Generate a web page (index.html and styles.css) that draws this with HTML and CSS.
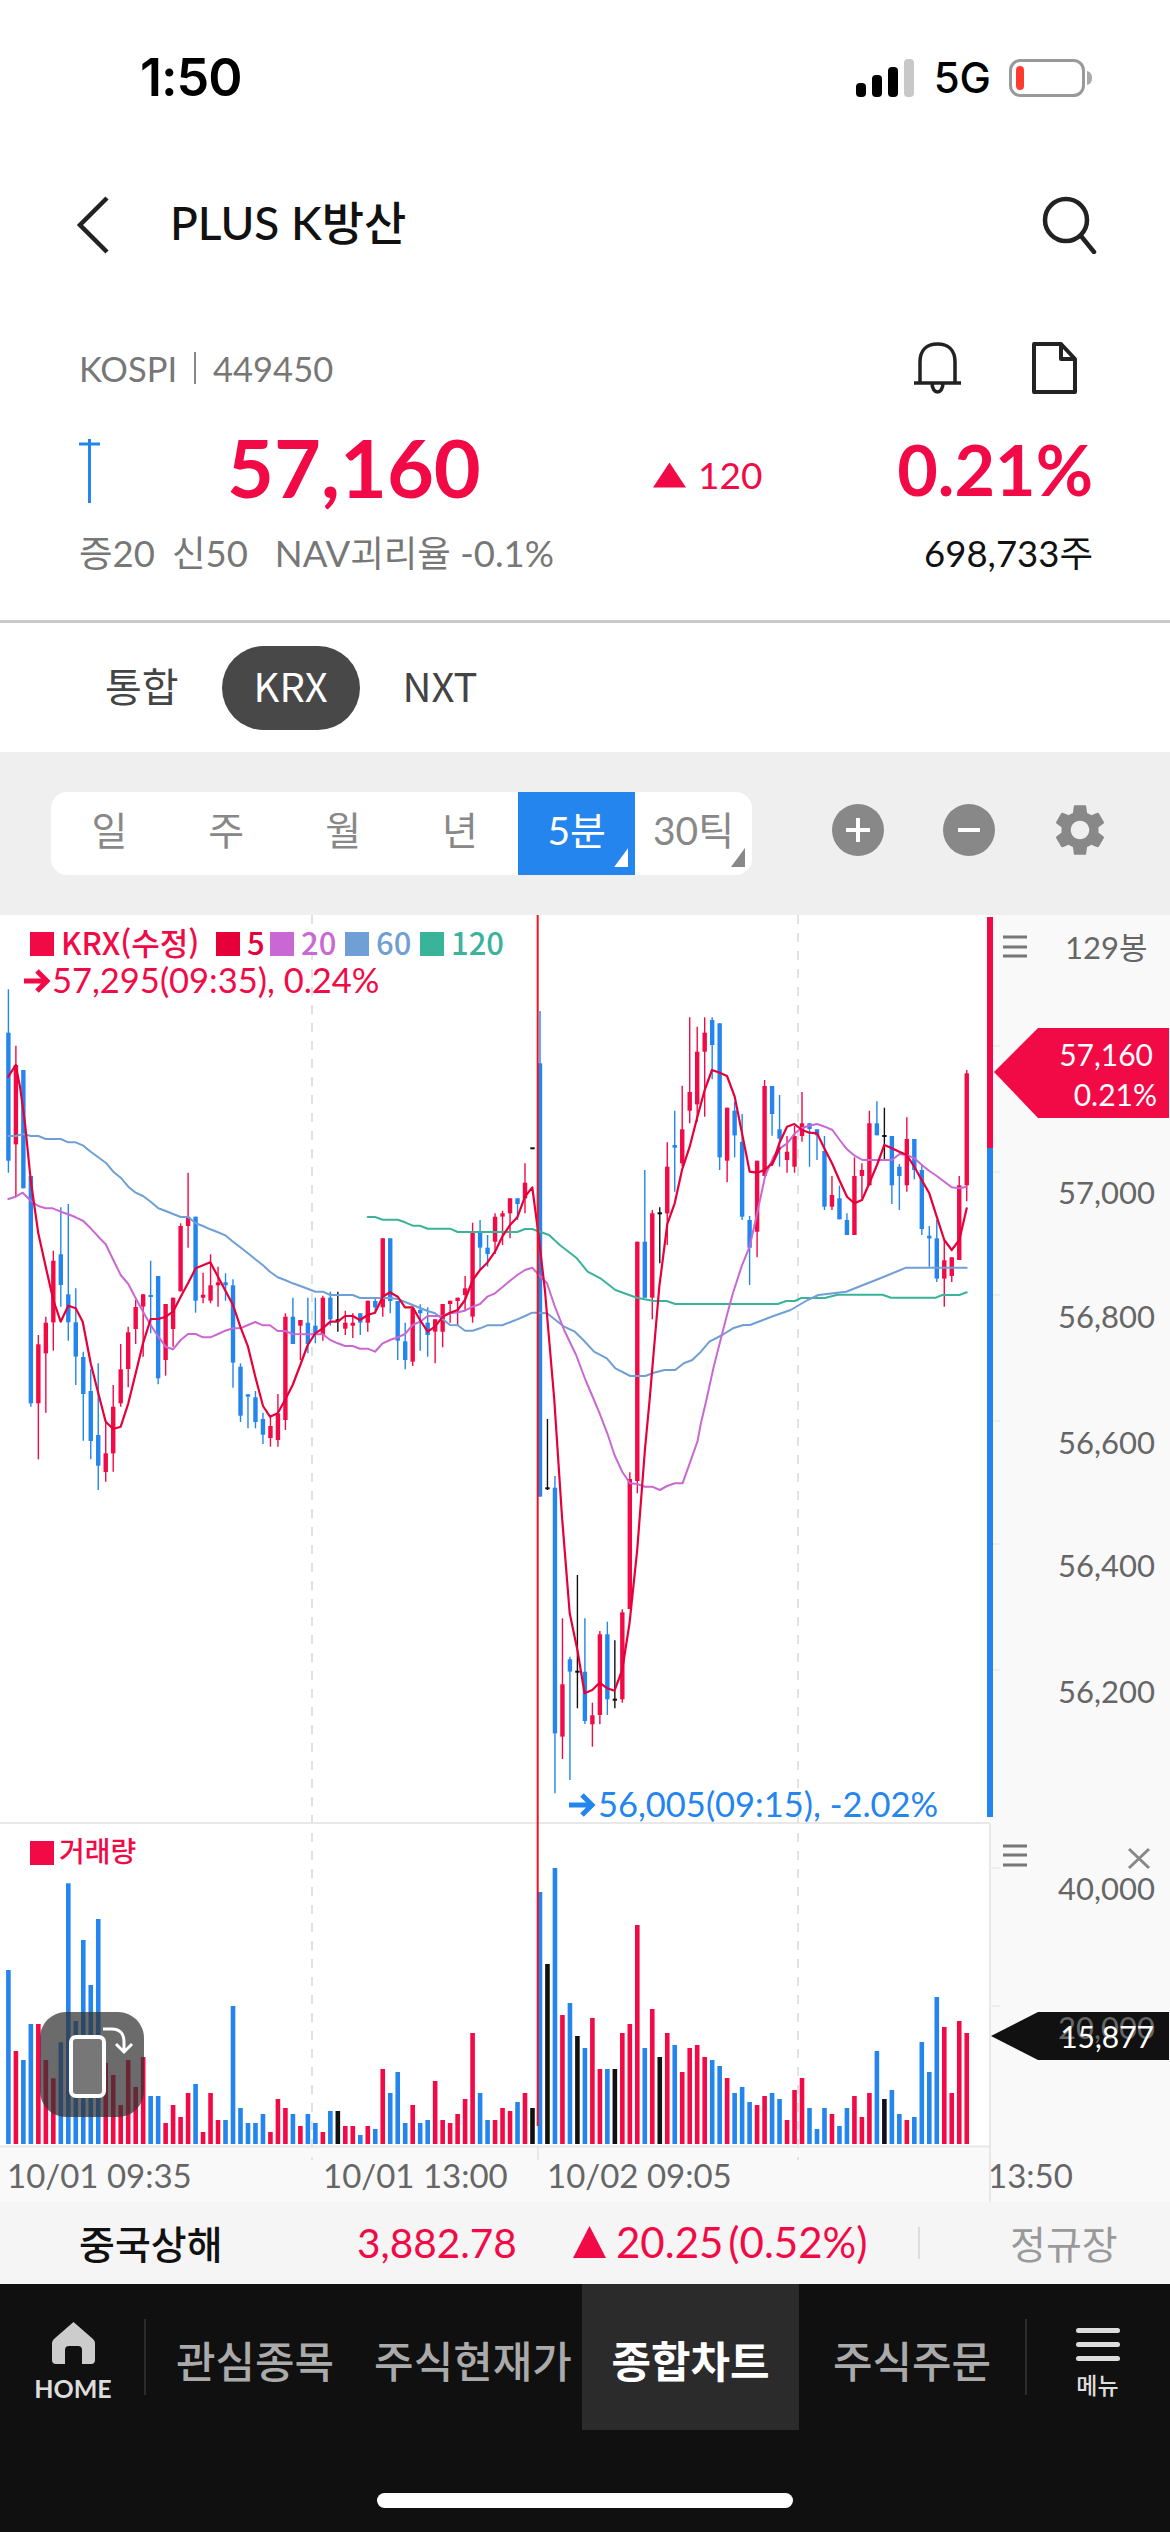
FILE: index.html
```html
<!DOCTYPE html>
<html lang="ko">
<head>
<meta charset="utf-8">
<title>PLUS K방산</title>
<link rel="stylesheet" href="styles.css">
</head>
<body>
<div class="phone">
  <div class="status">
    <span class="clock">1:50</span>
    <div class="status-right">
      <svg class="signal" viewBox="0 0 58 38"><rect class="sig-on" x="0" y="24" width="10" height="14" rx="4"/><rect class="sig-on" x="16" y="16" width="10" height="22" rx="4"/><rect class="sig-on" x="32" y="8" width="10" height="30" rx="4"/><rect class="sig-off" x="48" y="0" width="10" height="38" rx="4"/></svg>
      <span class="net">5G</span>
      <svg class="battery" viewBox="0 0 84 38"><rect class="bat-shell" x="1.5" y="1.5" width="73" height="35" rx="10"/><rect class="bat-level" x="7" y="7" width="8" height="24" rx="4"/><path class="bat-nub" d="M78 12 C82 13 83 16 83 19 C83 22 82 25 78 26 Z"/></svg>
    </div>
  </div>

  <div class="header">
    <svg class="back" viewBox="0 0 34 60"><path d="M31 3 L4 30 L31 57"/></svg>
    <h1 class="title">PLUS K방산</h1>
    <svg class="search" viewBox="0 0 56 58"><circle cx="25" cy="24" r="21"/><path d="M40 40 L53 56"/></svg>
  </div>

  <section class="quote">
    <div class="quote-meta">
      <span class="code">KOSPI<i class="code-sep"></i>449450</span>
      <div class="quote-actions">
        <svg class="bell" viewBox="0 0 49 53"><path d="M7 41 V20 C7 8 14 2 24.5 2 C35 2 42 8 42 20 V41 M1 41 H48 M19 41 C19 53 30 53 30 41"/></svg>
        <svg class="doc" viewBox="0 0 45 52"><path d="M2 2 H29 L43 17 V50 H2 Z M29 2 V17 H43"/></svg>
      </div>
    </div>
    <div class="quote-main">
      <svg class="mini" viewBox="0 0 21 64"><path d="M0 5 H21 M10.5 0 V64"/></svg>
      <span class="price">57,160</span>
      <span class="change"><i class="tri"></i>120</span>
      <span class="pct">0.21%</span>
    </div>
    <div class="quote-sub">
      <span class="sub-left"><span>증20</span><span>신50</span><span class="nav-rate">NAV괴리율 -0.1%</span></span>
      <span class="sub-right">698,733주</span>
    </div>
  </section>

  <nav class="tabs">
    <span class="tab">통합</span>
    <span class="tab tab-on">KRX</span>
    <span class="tab">NXT</span>
  </nav>

  <div class="toolbar">
    <div class="seg">
      <span class="seg-item">일</span>
      <span class="seg-item">주</span>
      <span class="seg-item">월</span>
      <span class="seg-item">년</span>
      <span class="seg-item seg-on corner">5분</span>
      <span class="seg-item corner">30틱</span>
    </div>
    <svg class="tool" viewBox="0 0 52 52"><circle class="tool-fill" cx="26" cy="26" r="26"/><path class="tool-mark" d="M26 14 V38 M14 26 H38"/></svg>
    <svg class="tool" viewBox="0 0 52 52"><circle class="tool-fill" cx="26" cy="26" r="26"/><path class="tool-mark" d="M15 26 H37"/></svg>
    <svg class="tool" viewBox="2.4 1.9 19.2 20.2"><path class="tool-fill" d="M19.14 12.94c.04-.3.06-.61.06-.94 0-.32-.02-.64-.07-.94l2.03-1.58c.18-.14.23-.41.12-.61l-1.92-3.32c-.12-.22-.37-.29-.59-.22l-2.39.96c-.5-.38-1.03-.7-1.62-.94l-.36-2.54c-.04-.24-.24-.41-.48-.41h-3.84c-.24 0-.43.17-.47.41l-.36 2.54c-.59.24-1.13.57-1.62.94l-2.39-.96c-.22-.08-.47 0-.59.22L2.74 8.87c-.12.21-.08.47.12.61l2.03 1.58c-.05.3-.09.63-.09.94s.02.64.07.94l-2.03 1.58c-.18.14-.23.41-.12.61l1.92 3.32c.12.22.37.29.59.22l2.39-.96c.5.38 1.03.7 1.62.94l.36 2.54c.05.24.24.41.48.41h3.84c.24 0 .44-.17.47-.41l.36-2.54c.59-.24 1.13-.56 1.62-.94l2.39.96c.22.08.47 0 .59-.22l1.92-3.32c.12-.22.07-.47-.12-.61l-2.01-1.58zM12 15.6c-1.98 0-3.6-1.62-3.6-3.6s1.62-3.6 3.6-3.6 3.6 1.62 3.6 3.6-1.62 3.6-3.6 3.6z"/></svg>
  </div>

  <svg class="chart" id="chart" viewBox="0 915 1170 1287" xmlns="http://www.w3.org/2000/svg">
    <rect class="plot" x="0" y="915" width="990" height="1232"/>
    <rect class="axis-bg" x="990" y="915" width="180" height="1287"/>
    <rect class="axis-bg" x="0" y="2147" width="1170" height="55"/>
    <path class="grid-dash" d="M312 915 V2160 M798 915 V2160"/>
    <path class="grid-solid" d="M0 1823 H990 M0 2146.5 H990 M990 1823 V2202 M538 2146 V2160"/>
    <path class="tick" d="M990 1046 H1000 M990 1172 H1000 M990 1295 H1000 M990 1421 H1000 M990 1544 H1000 M990 1670 H1000 M990 1868 H1000 M990 2006 H1000"/>

    <g id="volume"></g>
    <g id="candles"></g>
    <g id="lines"></g>

    <rect class="up-bar" x="987" y="917" width="6" height="231"/>
    <rect class="dn-bar" x="987" y="1148" width="6" height="669"/>
    <path class="cross" d="M537.7 915 V2126"/>

    <rect class="sq-main" x="30" y="932" width="24" height="24"/>
    <text class="leg leg-red" x="61" y="955">KRX(수정)</text>
    <rect class="sq-5" x="216" y="932" width="24" height="24"/>
    <text class="leg leg-5" x="247" y="955">5</text>
    <rect class="sq-20" x="270" y="932" width="24" height="24"/>
    <text class="leg leg-20" x="301" y="955">20</text>
    <rect class="sq-60" x="345" y="932" width="24" height="24"/>
    <text class="leg leg-60" x="376" y="955">60</text>
    <rect class="sq-120" x="420" y="932" width="24" height="24"/>
    <text class="leg leg-120" x="451" y="955">120</text>

    <path class="arrow-up" d="M24 981 H46 M37 971 L47 981 L37 991"/>
    <text class="extreme ext-up" x="52" y="993">57,295(09:35), 0.24%</text>
    <path class="arrow-dn" d="M569 1805 H591 M582 1795 L592 1805 L582 1815"/>
    <text class="extreme ext-dn" x="598" y="1817">56,005(09:15), -2.02%</text>

    <rect class="sq-main" x="30" y="1841" width="24" height="24"/>
    <text class="leg-vol" x="59" y="1862">거래량</text>

    <path class="menu-lines" d="M1003 937 H1027 M1003 947 H1027 M1003 956 H1027 M1003 1846 H1027 M1003 1855 H1027 M1003 1865 H1027"/>
    <path class="close-x" d="M1129 1849 L1149 1868 M1149 1849 L1129 1868"/>
    <text class="axis" x="1065" y="959">129봉</text>
    <text class="axis" x="1058" y="1204">57,000</text>
    <text class="axis" x="1058" y="1328">56,800</text>
    <text class="axis" x="1058" y="1454">56,600</text>
    <text class="axis" x="1058" y="1577">56,400</text>
    <text class="axis" x="1058" y="1703">56,200</text>
    <text class="axis" x="1058" y="1900">40,000</text>

    <path class="flag-red" d="M994 1072 L1038 1028 H1169 V1118 H1038 Z"/>
    <text class="flag-text" x="1153" y="1066">57,160</text>
    <text class="flag-text" x="1157" y="1106">0.21%</text>
    <path class="flag-black" d="M991 2036 L1038 2012 H1169 V2060 H1038 Z"/>
    <text class="axis axis-dim" x="1058" y="2039">20,000</text>
    <text class="flag-text" x="1154" y="2048">15,877</text>

    <text class="time" x="7" y="2188">10/01 09:35</text>
    <text class="time" x="323" y="2188">10/01 13:00</text>
    <text class="time" x="547" y="2188">10/02 09:05</text>
    <text class="time" x="988" y="2188">13:50</text>

    <rect class="rot-bg" x="40" y="2012" width="104" height="105" rx="26"/>
    <rect class="rot-phone" x="71" y="2037" width="33" height="59" rx="5"/>
    <path class="rot-arrow" d="M103 2029 H112 C120 2029 124 2034 124 2042 V2052 M116 2044 L124 2052 L132 2044"/>
  </svg>

  <div class="ticker">
    <span class="tick-name">중국상해</span>
    <span class="tick-price">3,882.78</span>
    <span class="tick-change"><i class="tick-tri"></i>20.25<span class="tick-pct">(0.52%)</span></span>
    <i class="tick-sep"></i>
    <span class="tick-state">정규장</span>
  </div>

  <footer class="nav">
    <div class="nav-row">
      <div class="nav-home">
        <svg class="home-icon" viewBox="0 0 43 42"><path fill-rule="evenodd" d="M21.5 0 L41 17 Q43 19 43 21 V38 Q43 42 39 42 H30 V28 Q30 24 26 24 H17 Q13 24 13 28 V42 H4 Q0 42 0 38 V21 Q0 19 2 17 Z"/></svg>
        <span class="home-label">HOME</span>
      </div>
      <span class="nav-item">관심종목</span>
      <span class="nav-item">주식현재가</span>
      <span class="nav-item nav-on">종합차트</span>
      <span class="nav-item nav-last">주식주문</span>
      <div class="nav-menu">
        <span class="burger"><i></i><i></i><i></i></span>
        <span class="menu-label">메뉴</span>
      </div>
    </div>
    <div class="home-bar"></div>
  </footer>
</div>
<script src="chart.js"></script>
</body>
</html>
```

FILE: styles.css
```css
* { box-sizing: border-box; }
html, body { margin: 0; padding: 0; background: #fff; }
body { font-family: Lato, "Noto Sans CJK KR", sans-serif; color: #111; }
i { font-style: normal; display: block; }
svg { display: block; }

.phone { width: 1170px; height: 2532px; display: flex; flex-direction: column; overflow: hidden; background: #fff; }

/* status bar */
.status { height: 150px; flex: none; display: flex; align-items: flex-start; justify-content: space-between; padding: 53px 77px 0 140px; }
.clock { font-family: Inter, sans-serif; font-weight: 600; font-size: 52px; line-height: 50px; letter-spacing: -1px; color: #000; }
.status-right { display: flex; align-items: center; height: 38px; margin-top: 6px; }
.signal { width: 58px; height: 38px; }
.sig-on { fill: #000; }
.sig-off { fill: #c8c8c8; }
.net { font-family: Inter, sans-serif; font-weight: 500; font-size: 42px; line-height: 38px; margin-left: 20px; color: #000; }
.battery { width: 84px; height: 38px; margin-left: 18px; }
.bat-shell { fill: none; stroke: #999; stroke-width: 3; }
.bat-level { fill: #ff3b30; }
.bat-nub { fill: #aaa; }

/* header */
.header { height: 150px; flex: none; display: flex; align-items: center; padding: 0 76px; }
.back { width: 34px; height: 60px; fill: none; stroke: #222; stroke-width: 4.5; }
.title { margin: -4px 0 0 60px; font-size: 46px; font-weight: 500; line-height: 56px; color: #111; flex: 1; }
.search { width: 56px; height: 58px; fill: none; stroke: #222; stroke-width: 4.5; stroke-linecap: round; margin-right: -3px; }

/* quote */
.quote { height: 323px; flex: none; padding: 28px 77px 0 79px; border-bottom: 3px solid #c9c9c9; }
.quote-meta { height: 80px; display: flex; align-items: center; justify-content: space-between; }
.code { display: flex; align-items: center; font-size: 34.5px; color: #777; }
.code-sep { width: 2px; height: 32px; background: #888; margin: 0 17px; }
.quote-actions { display: flex; align-items: center; gap: 70px; padding-right: 16px; }
.bell { width: 49px; height: 53px; fill: none; stroke: #222; stroke-width: 3.5; }
.doc { width: 45px; height: 52px; fill: none; stroke: #222; stroke-width: 4; stroke-linejoin: round; }

.quote-main { height: 90px; margin-top: 14px; display: grid; grid-template-columns: 148px 426px 1fr auto; align-items: center; }
.mini { width: 21px; height: 64px; fill: none; stroke: #2385ed; stroke-width: 3; margin-top: 6px; }
.price { font-size: 81px; font-weight: 700; line-height: 90px; color: #f20a47; margin-top: -3px; }
.change { display: flex; align-items: center; font-size: 37px; line-height: 44px; color: #f20a47; margin-top: 14px; }
.tri { width: 33px; height: 25px; background: #f20a47; clip-path: polygon(50% 0, 100% 100%, 0 100%); margin-right: 12px; }
.pct { font-size: 70px; font-weight: 700; line-height: 90px; color: #f20a47; margin-top: 2px; }

.quote-sub { height: 46px; margin-top: 18px; display: flex; align-items: center; justify-content: space-between; font-size: 36.5px; line-height: 46px; }
.sub-left { display: flex; gap: 17px; color: #777; }
.nav-rate { margin-left: 10px; }
.sub-right { color: #111; }

/* exchange tabs */
.tabs { height: 129px; flex: none; display: flex; align-items: center; padding-left: 105px; gap: 43px; font-family: "Noto Sans CJK KR", sans-serif; }
.tab { height: 84px; padding-bottom: 5px; display: flex; align-items: center; justify-content: center; font-size: 40px; color: #444; }
.tab-on { width: 138px; background: #484848; color: #fff; border-radius: 42px; }

/* toolbar */
.toolbar { height: 163px; flex: none; background: #efefef; display: flex; align-items: flex-start; padding: 40px 0 0 51px; gap: 59px; }
.seg { display: flex; width: 701px; height: 83px; background: #fff; border-radius: 16px; overflow: hidden; margin-right: 21px; }
.seg-item { position: relative; flex: 1; display: flex; align-items: center; justify-content: center; font-size: 39px; line-height: 77px; padding-bottom: 6px; color: #888; }
.seg-on { background: #2385ed; color: #fff; }
.corner::after { content: ""; position: absolute; right: 7px; bottom: 8px; width: 14px; height: 19px; background: #888; clip-path: polygon(100% 0, 100% 100%, 0 100%); }
.seg-on.corner::after { background: #fff; }
.tool { width: 52px; height: 52px; margin-top: 12px; }
.tool-fill { fill: #888; }
.tool-mark { fill: none; stroke: #fff; stroke-width: 4; }

/* chart */
.chart { width: 1170px; height: 1287px; flex: none; font-family: Lato, "Noto Sans CJK KR", sans-serif; }
.plot { fill: #fff; }
.axis-bg { fill: #f9f9f9; }
.grid-dash { fill: none; stroke: #e2e2e2; stroke-width: 2; stroke-dasharray: 9 9; }
.grid-solid { fill: none; stroke: #e8e8e8; stroke-width: 2; }
.tick { fill: none; stroke: #eee; stroke-width: 2; }

.vol-r, .body-r { fill: #f20a47; }
.vol-b, .body-b { fill: #2385ed; }
.vol-k, .body-k { fill: #111; }
.wick-r { stroke: #f20a47; }
.wick-b { stroke: #2385ed; }
.wick-k { stroke: #111; }
.wick { stroke-width: 1.4; fill: none; }

.ma { fill: none; stroke-linejoin: round; stroke-linecap: round; stroke-width: 2; }
.ma5 { stroke: #e6003a; stroke-width: 2.2; }
.ma20 { stroke: #c968d2; }
.ma60 { stroke: #6f9fd4; }
.ma120 { stroke: #3bb39a; }

.up-bar { fill: #f20a47; }
.dn-bar { fill: #2385ed; }
.cross { fill: none; stroke: #f5121f; stroke-width: 2; }

.sq-main { fill: #f20a47; }
.sq-5 { fill: #e6003a; }
.sq-20 { fill: #c968d2; }
.sq-60 { fill: #6f9fd4; }
.sq-120 { fill: #3bb39a; }
.leg { font-family: "Noto Sans CJK KR", sans-serif; font-size: 31px; font-weight: 500; }
.leg-red { fill: #f20a47; }
.leg-5 { fill: #e6003a; }
.leg-20 { fill: #c968d2; }
.leg-60 { fill: #6f9fd4; }
.leg-120 { fill: #3bb39a; }
.leg-vol { font-size: 28px; font-weight: 500; fill: #f20a47; }

.extreme { font-size: 34.5px; }
.ext-up { fill: #f20a47; }
.ext-dn { fill: #2385ed; }
.arrow-up, .arrow-dn { fill: none; stroke-width: 5; }
.arrow-up { stroke: #f20a47; }
.arrow-dn { stroke: #2385ed; }

.axis { font-size: 31px; fill: #666; }
.axis-dim { fill: #666; }
.time { font-size: 33px; fill: #666; }
.menu-lines { fill: none; stroke: #777; stroke-width: 3; }
.close-x { fill: none; stroke: #888; stroke-width: 3; }
.flag-red { fill: #f20a47; }
.flag-black { fill: #111; }
.flag-text { font-size: 30px; fill: #fff; text-anchor: end; }

.rot-bg { fill: rgba(50, 50, 50, 0.72); }
.rot-phone { fill: #777; stroke: #fff; stroke-width: 4; }
.rot-arrow { fill: none; stroke: #fff; stroke-width: 3; }

/* ticker */
.ticker { height: 82px; flex: none; background: #f5f5f5; display: flex; align-items: center; padding-left: 79px; }
.tick-name { width: 278px; font-size: 39px; font-weight: 500; color: #111; margin-top: -2px; }
.tick-price { width: 216px; font-size: 40.5px; color: #f20a47; margin-top: -2px; }
.tick-change { display: flex; align-items: center; font-size: 42px; color: #f20a47; width: 345px; margin-top: -2px; }
.tick-tri { width: 33px; height: 32px; background: #f20a47; clip-path: polygon(50% 0, 100% 100%, 0 100%); margin-right: 10px; }
.tick-pct { margin-left: 5px; }
.tick-sep { width: 2px; height: 32px; background: #ddd; }
.tick-state { margin-left: 90px; font-size: 39px; color: #999; margin-top: -2px; }

/* bottom nav */
.nav { flex: 1; background: #101010; display: flex; flex-direction: column; }
.nav-row { height: 146px; display: flex; }
.nav-home { width: 146px; display: flex; flex-direction: column; align-items: center; justify-content: flex-start; padding: 38px 0 0; position: relative; }
.nav-home::after { content: ""; position: absolute; right: 0; top: 35px; width: 2px; height: 76px; background: #2c2c2c; }
.home-icon { width: 43px; height: 42px; fill: #ccc; margin-left: 1px; }
.home-label { font-size: 25px; font-weight: 700; line-height: 36px; color: #ddd; margin-top: 6px; }
.nav-item { width: 218px; display: flex; align-items: center; justify-content: center; font-size: 43px; font-weight: 500; color: #aaa; padding-top: 4px; }
.nav-on { width: 217px; background: #2b2b2b; color: #fff; font-weight: 700; }
.nav-last { width: 226px; }
.nav-menu { flex: 1; display: flex; flex-direction: column; align-items: center; padding-top: 44px; position: relative; }
.nav-menu::before { content: ""; position: absolute; left: 0; top: 35px; width: 2px; height: 76px; background: #2c2c2c; }
.burger { display: flex; flex-direction: column; gap: 9px; width: 44px; }
.burger i { height: 5px; border-radius: 3px; background: #ddd; }
.menu-label { font-size: 23px; font-weight: 500; line-height: 32px; color: #ddd; margin-top: 8px; }
.home-bar { width: 416px; height: 15px; border-radius: 8px; background: #fff; margin: 63px 0 0 377px; }
```

FILE: chart.js
```js
(function () {
  var NS = 'http://www.w3.org/2000/svg';
  var STEP = 7.487, X0 = 8.4, BASE = 2144;
  function x(i) { return X0 + STEP * i; }
  function el(parent, name, attrs) {
    var n = document.createElementNS(NS, name);
    for (var k in attrs) n.setAttribute(k, attrs[k]);
    parent.appendChild(n);
    return n;
  }

  // volume: colour + top edge, in 3x units from y=1800
  var VOL = 'b510 r753 b780 b672 r672 r780 r835 b727 b250 b663 b420 b555 b357 r789 r825 r915 r780 r861 r771 b888 b888 r969 r915 r951 r879 b852 r996 r879 r960 b960 b618 b924 b969 b969 b942 r996 r897 r924 b942 r978 b942 b969 r996 b933 k933 r978 r978 b1005 r978 b987 r807 b879 b816 b969 r915 b969 b960 r843 r960 r969 r942 r897 r699 b879 b960 r960 r924 r933 b906 r879 k924 b276 k492 b204 r645 b609 k708 b744 r654 r807 b807 k807 r699 r672 r375 b744 r627 k771 r699 b735 r816 r744 r735 r771 b780 b798 r834 b879 b861 b906 r915 r888 b879 b897 r960 r870 r834 b924 b987 b924 r942 b978 b924 r888 r951 r879 b753 k897 b870 b942 r960 b951 b726 b816 b591 r681 r879 r663 r699'.split(' ');
  var volG = document.getElementById('volume');
  VOL.forEach(function (v, i) {
    var top = 1800 + parseInt(v.slice(1), 10) / 3;
    el(volG, 'rect', { 'class': 'vol-' + v[0], x: (x(i) - 2.3).toFixed(2), y: top.toFixed(1), width: 4.6, height: (BASE - top).toFixed(1) });
  });

  // candles: colour, high, body top, body bottom, low, in 3x units from y=980
  var C = [
    'b 28 158 542 578','r 197 255 493 650','b 270 270 625 625','b 588 588 1270 1280','r 1065 1093 1270 1438','r 1010 1028 1120 1298',
    'r 812 842 1027 1112','b 682 823 915 980','b 672 943 1027 1082','b 925 1027 1130 1215','b 1115 1131 1242 1382','b 1168 1233 1383 1438',
    'b 1150 1365 1457 1530','r 1320 1420 1476 1505','r 1215 1280 1420 1475','r 1092 1168 1270 1280','r 1040 1057 1167 1222','r 960 981 1047 1092',
    'r 943 943 980 1130','b 842 945 951 1060','b 888 888 1195 1213','r 972 972 1140 1187','r 953 953 1047 1100','r 730 738 934 934',
    'r 578 710 738 803','b 710 710 962 998','r 878 944 953 970','r 823 916 962 970','r 860 907 916 980','b 880 907 916 962',
    'b 898 916 1148 1223','b 1150 1160 1307 1326','b 1243 1243 1250 1345','b 1233 1252 1326 1345','b 1298 1317 1364 1392','r 1310 1338 1374 1400',
    'r 1242 1300 1380 1400','r 1000 1010 1320 1350','b 953 1010 1092 1092','r 1020 1020 1037 1140','b 953 1028 1092 1120','b 953 1037 1065 1090',
    'r 947 953 1065 1082','b 935 953 1018 1037','k 935 1018 1020 1055','r 992 1028 1046 1065','r 1000 1028 1037 1074','b 1000 1000 1028 1065',
    'r 962 962 1028 1055','b 953 963 982 1000','r 775 775 982 1010','b 775 775 963 1000','b 963 963 1082 1140','b 1028 1084 1140 1168',
    'r 982 985 1145 1158','b 973 990 1000 1112','b 982 1028 1065 1130','r 1018 1018 1055 1150','r 972 972 1055 1102','r 962 962 972 1028',
    'r 953 953 963 1038','r 888 925 945 990','r 728 757 1010 1028','b 720 757 803 870','b 765 803 822 860','r 700 710 785 822',
    'r 692 700 710 795','r 655 655 700 775','b 655 655 672 720','r 550 608 655 700','k 504 502 507 507','b 93 250 1550 1550',
    'k 1317 1522 1528 1530','b 1488 1523 2260 2440','r 1915 2113 2270 2337','b 2030 2038 2075 2400','k 1785 2072 2078 2185','b 1915 2075 2223 2232',
    'r 2168 2206 2233 2300','r 1953 1963 2205 2233','b 1925 1963 2158 2205','k 1981 2156 2162 2185','r 1888 1897 2158 2168','r 1477 1497 1887 1887',
    'r 785 785 1503 1540','b 570 785 953 953','r 690 700 953 1018','k 682 697 700 850','r 487 560 700 795','b 392 495 503 635',
    'r 317 448 550 560','r 112 336 392 430','r 140 215 373 425','r 112 158 215 410','b 112 120 195 298','b 130 130 532 570',
    'r 383 383 542 607','b 365 392 466 532','b 402 486 710 720','b 708 720 803 915','r 542 542 755 832','r 300 318 588 588',
    'b 318 318 402 467','b 345 448 476 560','r 468 515 540 578','r 438 468 560 578','r 336 430 468 485','b 430 430 447 560',
    'b 448 448 466 540','b 468 513 680 690','r 588 645 680 690','b 617 655 718 718','b 700 720 765 765','r 532 588 765 765',
    'r 550 570 588 655','r 392 430 616 616','b 364 430 466 466','k 383 465 469 540','b 468 468 616 672','b 552 560 588 690',
    'r 412 477 616 635','b 477 477 570 598','b 552 570 747 765','b 738 767 775 860','b 720 775 896 906','r 776 841 896 980',
    'r 832 832 888 906','r 588 616 840 840','r 270 280 616 664'
  ];
  var cG = document.getElementById('candles');
  function cy(v) { return (980 + v / 3).toFixed(1); }
  C.forEach(function (s, i) {
    var p = s.split(' '), c = p[0], px = x(i);
    if (+p[4] > +p[1]) el(cG, 'path', { 'class': 'wick wick-' + c, d: 'M' + px.toFixed(2) + ' ' + cy(+p[1]) + 'V' + cy(+p[4]) });
    var top = 980 + p[2] / 3, h = Math.max((p[3] - p[2]) / 3, 2);
    el(cG, 'rect', { 'class': 'body-' + c, x: (px - 2.2).toFixed(2), y: top.toFixed(1), width: 4.4, height: h.toFixed(1) });
  });

  // moving averages: traced segments, each with its own origin and scale
  function seg(x0, sx, y0, a) {
    var out = [];
    for (var i = 0; i < a.length; i += 2) out.push((x0 + a[i] / sx).toFixed(1) + ',' + (y0 + a[i + 1] / 3).toFixed(1));
    return out;
  }
  var Z = {
    a: function (p) { return seg(0, 3, 980, p); },
    b: function (p) { return seg(270, 3, 1100, p); },
    c: function (p) { return seg(500, 2.34, 900, p); },
    d: function (p) { return seg(500, 2.34, 1400, p); },
    e: function (p) { return seg(530, 3, 1000, p); },
    f: function (p) { return seg(760, 3, 1040, p); }
  };
  var MA = {
    ma5: [].concat(
      Z.a([25,290,47,255,60,320,75,430,92,600,115,760,137,860,160,960,182,1025,205,977,227,985,248,1025,272,1150,295,1240,317,1325,340,1347,362,1340,385,1270,407,1180,429,1090,452,1017,475,1017,497,1010,519,995,542,950,564,910,587,865,631,847,654,890,699,975,721,1040,744,1100,766,1190,789,1278,810,1310]),
      Z.b([23,940,45,900,68,855,91,795,113,735,136,700,158,685,181,665,203,665,225,648,248,648,270,660,293,645,315,638,338,590,360,577,383,590,405,622,428,622,450,660,473,695,495,680,518,650,540,638,563,630,585,600,608,540,630,510,652,488,675,455,697,410,720,375,742,352,765,290,787,262,805,400]),
      Z.c([105,1170,127,1500]),
      Z.d([145,350,163,640,181,750,198,880,216,870,233,848,251,865,268,872,286,810,303,670,321,450,339,150,350,0]),
      Z.e([388,860,412,672,434,610,456,510,479,440,501,355,524,270,546,210,569,218,591,228,614,290,636,400,659,515,681,518,704,510,726,490,749,445]),
      Z.f([36,375,58,310,81,260,103,252,126,270,148,278,171,280,193,325,216,370,238,420,261,470,283,490,306,480,328,430,351,375,373,315,396,325,418,335,440,345,463,380,485,420,508,460,530,530,553,600,575,630,598,600,620,505])
    ),
    ma20: [].concat(
      Z.a([25,657,47,650,68,638,92,662,115,678,137,685,158,685,182,695,205,703,227,712,250,723,272,745,295,770,317,793,340,840,362,885,385,912,407,955,429,995,452,1035,475,1070,497,1100,519,1108,542,1080,564,1062,587,1062,609,1072,631,1072,654,1062,676,1052,699,1045,721,1045,744,1035,766,1026,789,1036,810,1036]),
      Z.b([23,693,45,693,68,702,113,703,158,703,181,720,203,730,225,738,248,738,270,746,293,746,315,755,338,730,360,720,383,712,405,702,428,675,450,665,473,648,495,648,518,648,540,640,563,637,585,632,608,620,630,612,652,590,675,580,697,562,720,542,742,525,765,510,787,503,800,518]),
      Z.c([110,1150,127,1215,150,1290,178,1365,200,1440,220,1500]),
      Z.d([233,40,251,100,268,165,286,215,304,250,321,252,339,260,356,260,374,270,391,258,409,250,427,250,444,190,462,125,470,70,483,0]),
      Z.c([500,1400,530,1250,545,1180,565,1100,584,1040,600,950,620,830,640,770,655,745,672,730,690,700,705,685,723,677,742,672,760,680,778,690,795,720,812,748,830,767,848,780,864,780,882,780,900,780,917,780,935,762,952,765,970,775,987,795,1004,812,1022,828,1040,845,1057,862,1075,865,1092,860])
    ),
    ma60: [].concat(
      Z.a([25,468,47,468,70,462,92,468,115,468,137,477,182,477,205,487,227,487,250,497,272,515,295,532,317,548,340,575,362,593,385,620,407,638,429,648,452,665,475,685,497,693,519,702,542,711,564,711,587,730,609,738,631,748,654,757,676,766,699,785,721,802,744,820,766,838,789,856,810,875]),
      Z.b([23,532,45,540,68,550,91,558,113,566,136,575,158,575,181,585,225,585,248,585,270,594,293,594,315,594,360,594,383,597,405,606,428,615,450,624,473,633,495,640,518,658,540,675,563,676,585,692,608,692,630,685,652,676,697,676,720,667,742,658,765,648,787,638,800,638]),
      Z.c([110,1240,130,1260,150,1280,175,1295,195,1320,220,1355,250,1375,270,1405,305,1428,340,1428,360,1418,385,1410,410,1410,430,1390,450,1380,470,1355,490,1325,520,1305,545,1285,570,1275,585,1275,605,1265,640,1248,680,1230,700,1215,720,1200,745,1185,780,1180,810,1175,850,1155,890,1135,950,1103,1092,1103])
    ),
    ma120: [].concat(
      Z.b([293,351,315,351,338,359,383,359,405,367,428,377,450,377,473,386,518,386,540,386,563,396,585,396,742,396,765,387,787,387,800,392]),
      Z.c([95,996,115,1005,140,1035,180,1075,205,1115,235,1135,270,1170,320,1193,360,1203,390,1203,410,1212,650,1212,670,1203,690,1203,705,1194,760,1194,790,1184,895,1184,915,1193,1020,1193,1035,1185,1075,1185,1092,1177])
    )
  };
  var lG = document.getElementById('lines');
  ['ma120', 'ma60', 'ma20', 'ma5'].forEach(function (k) {
    el(lG, 'polyline', { 'class': 'ma ' + k, points: MA[k].join(' ') });
  });
})();
```
